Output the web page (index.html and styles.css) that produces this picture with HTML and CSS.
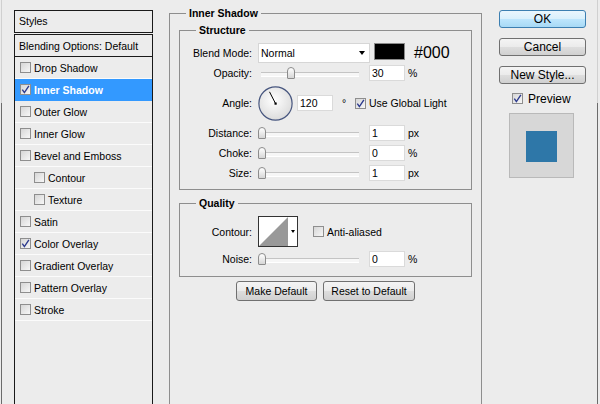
FILE: index.html
```html
<!DOCTYPE html>
<html lang="en">
<head>
    <meta charset="UTF-8">
    <title>Layer Style - Inner Shadow</title>
    <link rel="stylesheet" href="styles.css">
</head>
<body>
    <div class="dialog">
        <!-- Styles list -->
        <div class="styles-panel">
            <div class="styles-head">Styles</div>
            <ul class="style-list">
                <li class="blend">Blending Options: Default</li>
                <li><span class="check"></span>Drop Shadow</li>
                <li class="active"><span class="check"><svg viewBox="0 0 9 9"><path d="M1.3 4.6 L3.4 7.6 L7.9 0.8"/></svg></span>Inner Shadow</li>
                <li><span class="check"></span>Outer Glow</li>
                <li><span class="check"></span>Inner Glow</li>
                <li><span class="check"></span>Bevel and Emboss</li>
                <li class="sub"><span class="check"></span>Contour</li>
                <li class="sub"><span class="check"></span>Texture</li>
                <li><span class="check"></span>Satin</li>
                <li><span class="check"><svg viewBox="0 0 9 9"><path d="M1.3 4.6 L3.4 7.6 L7.9 0.8"/></svg></span>Color Overlay</li>
                <li><span class="check"></span>Gradient Overlay</li>
                <li><span class="check"></span>Pattern Overlay</li>
                <li><span class="check"></span>Stroke</li>
            </ul>
        </div>

        <!-- Options -->
        <div class="options">
            <fieldset class="group outer">
                <legend>Inner Shadow</legend>

                <fieldset class="group structure">
                    <legend>Structure</legend>
                    <div class="row">
                        <span class="label">Blend Mode:</span>
                        <div class="select"><span>Normal</span><span class="arrow"></span></div>
                        <span class="swatch"></span>
                        <span class="hex">#000</span>
                    </div>
                    <div class="row">
                        <span class="label">Opacity:</span>
                        <div class="slider"><span class="thumb" style="left: 26px"></span></div>
                        <span class="field">30</span>
                        <span class="unit">%</span>
                    </div>
                    <div class="row angle">
                        <span class="label">Angle:</span>
                        <svg class="dial" width="35" height="35" viewBox="0 0 35 35">
                            <defs>
                                <radialGradient id="dialFill" cx="45%" cy="40%" r="60%">
                                    <stop offset="0" stop-color="#ffffff"/>
                                    <stop offset="1" stop-color="#dcdcdc"/>
                                </radialGradient>
                            </defs>
                            <circle cx="17.5" cy="17.5" r="16.6" fill="url(#dialFill)" stroke="#46557e" stroke-width="1.2"/>
                            <line x1="17.5" y1="17.5" x2="11.5" y2="5.8" stroke="#000" stroke-width="1"/>
                            <rect x="16.5" y="16.5" width="2.2" height="2.2" fill="#000"/>
                        </svg>
                        <span class="field near">120</span>
                        <span class="deg">°</span>
                        <span class="check"><svg viewBox="0 0 9 9"><path d="M1.3 4.6 L3.4 7.6 L7.9 0.8"/></svg></span>
                        <span>Use Global Light</span>
                    </div>
                    <div class="row spaced">
                        <span class="label">Distance:</span>
                        <div class="slider"><span class="thumb" style="left: -3px"></span></div>
                        <span class="field">1</span>
                        <span class="unit">px</span>
                    </div>
                    <div class="row">
                        <span class="label">Choke:</span>
                        <div class="slider"><span class="thumb" style="left: -3px"></span></div>
                        <span class="field">0</span>
                        <span class="unit">%</span>
                    </div>
                    <div class="row">
                        <span class="label">Size:</span>
                        <div class="slider"><span class="thumb" style="left: -3px"></span></div>
                        <span class="field">1</span>
                        <span class="unit">px</span>
                    </div>
                </fieldset>

                <fieldset class="group quality">
                    <legend>Quality</legend>
                    <div class="row contour-row">
                        <span class="label">Contour:</span>
                        <div class="contour">
                            <svg width="29" height="29" viewBox="0 0 29 29">
                                <polygon points="0,29 29,0 29,29" fill="#999"/>
                            </svg>
                            <span class="contour-drop"><span class="arrow"></span></span>
                        </div>
                        <span class="check aa"></span>
                        <span>Anti-aliased</span>
                    </div>
                    <div class="row noise">
                        <span class="label">Noise:</span>
                        <div class="slider"><span class="thumb" style="left: -3px"></span></div>
                        <span class="field">0</span>
                        <span class="unit">%</span>
                    </div>
                </fieldset>

                <div class="btn-row">
                    <button class="btn make">Make Default</button>
                    <button class="btn reset">Reset to Default</button>
                </div>
            </fieldset>
        </div>

        <!-- Actions -->
        <div class="actions">
            <button class="btn big ok">OK</button>
            <button class="btn big">Cancel</button>
            <button class="btn big">New Style...</button>
            <div class="preview-toggle">
                <span class="check"><svg viewBox="0 0 9 9"><path d="M1.3 4.6 L3.4 7.6 L7.9 0.8"/></svg></span>
                <span>Preview</span>
            </div>
            <div class="preview">
                <span class="preview-swatch"></span>
            </div>
        </div>
    </div>
</body>
</html>
```

FILE: styles.css
```css
/* Base */
* {
    box-sizing: border-box;
    margin: 0;
    padding: 0;
}

body {
    font-family: 'Liberation Sans', Arial, sans-serif;
    font-size: 10.5px;
    color: #000;
    background: #ececec;
    overflow: hidden;
}

.dialog {
    display: flex;
    align-items: flex-start;
    width: 597px;
    height: 404px;
    margin-left: 1px;
    border-left: 1px solid #8a8a8a;
    border-right: 1px solid #8a8a8a;
    border-image: linear-gradient(#d0d0d0 0, #d0d0d0 103px, #6b6b6b 103px) 1;
    overflow: hidden;
}

/* Checkbox */
.check {
    display: inline-flex;
    align-items: center;
    justify-content: center;
    flex-shrink: 0;
    width: 11px;
    height: 11px;
    border: 1px solid #8e8e8e;
    background: linear-gradient(135deg, #d6d6d6, #f7f7f7);
    margin-right: 3px;
}

.check svg {
    width: 9px;
    height: 9px;
}

.check path {
    fill: none;
    stroke: #2d3b8e;
    stroke-width: 1.4;
}

/* Styles list */
.styles-panel {
    margin: 10px 0 0 12px;
    width: 139px;
}

.styles-head {
    height: 23px;
    border: 1px solid #1a1a1a;
    padding-left: 4px;
    line-height: 21px;
}

.style-list {
    list-style: none;
    margin-top: 1px;
    height: 380px;
    border: 1px solid #1a1a1a;
}

.style-list li {
    display: flex;
    align-items: center;
    height: 22px;
    padding-left: 5px;
    border-bottom: 1px solid #fbfbfb;
}

.style-list li.blend {
    padding-left: 4px;
    border-bottom-color: #1a1a1a;
}

.style-list li.sub {
    padding-left: 19px;
}

.style-list li.active {
    background: #3399ff;
    border-bottom-color: #3399ff;
    color: #fff;
    font-weight: bold;
}

/* Options */
.options {
    margin: 7px 0 0 16px;
    width: 313px;
}

fieldset.group {
    border: 1px solid #8e8e8e;
    min-inline-size: 0;
    padding: 0;
}

fieldset.group legend {
    margin-left: 16px;
    padding: 0 3px;
    font-weight: bold;
    line-height: 12px;
}

.outer {
    height: 420px;
}

.structure {
    margin: 5px 9px 0;
    padding: 7px 0 6px !important;
}

.quality {
    margin: 7px 9px 0;
    padding: 7px 0 7px !important;
}

.row {
    display: flex;
    align-items: center;
    height: 20px;
    white-space: nowrap;
}

.row .label {
    width: 72px;
    margin-right: 6px;
    text-align: right;
}

.row.angle {
    height: 34px;
    margin-top: 3px;
}

.row.spaced {
    margin-top: 3px;
}

.row.contour-row {
    height: 31px;
}

.row.noise {
    margin-top: 2px;
}

.select {
    display: flex;
    align-items: center;
    justify-content: space-between;
    width: 112px;
    height: 20px;
    padding: 0 4px 0 2px;
    background: #fff;
    border: 1px solid #d6d6d6;
}

.arrow {
    width: 0;
    height: 0;
    border-left: 3.5px solid transparent;
    border-right: 3.5px solid transparent;
    border-top: 4px solid #000;
}

.swatch {
    align-self: flex-start;
    width: 31px;
    height: 17px;
    margin-left: 4px;
    background: #000;
    border: 1px solid #8a8a8a;
}

.hex {
    margin-left: 9px;
    font-size: 16px;
}

/* Slider */
.slider {
    position: relative;
    width: 98px;
    height: 12px;
    margin-left: 3px;
}

.slider::before {
    content: "";
    position: absolute;
    left: 0;
    right: 0;
    top: 5px;
    height: 3px;
    background: #f6f6f6;
    border-top: 1px solid #c4c4c4;
    border-bottom: 1px solid #fff;
}

.thumb {
    position: absolute;
    top: 0;
    width: 8px;
    height: 12px;
    border: 1px solid #8c8c8c;
    border-radius: 4px 4px 1px 1px;
    background: linear-gradient(#ffffff, #d6d6d6);
}

.field {
    width: 36px;
    height: 16px;
    margin-left: 10px;
    padding-left: 2px;
    line-height: 14px;
    background: #fff;
    border: 1px solid #dadada;
}

.field.near {
    margin-left: 4px;
}

.unit {
    margin-left: 3px;
}

.deg {
    margin: 0 9px 0 9px;
    width: 4px;
}

/* Contour picker */
.contour {
    display: flex;
    width: 40px;
    height: 31px;
    background: #fff;
    border: 1px solid #333;
}

.contour-drop {
    display: flex;
    align-items: center;
    justify-content: center;
    flex: 1;
}

.contour-drop .arrow {
    border-left-width: 2.5px;
    border-right-width: 2.5px;
    border-top-width: 3px;
}

.check.aa {
    margin-left: 15px;
}

/* Buttons */
.btn-row {
    display: flex;
    justify-content: center;
    gap: 6px;
    margin-top: 4px;
}

.btn {
    height: 20px;
    font-family: inherit;
    font-size: 10.5px;
    color: #000;
    border: 1px solid #707070;
    border-radius: 3px;
    background: linear-gradient(#f4f4f4, #ebebeb 50%, #dedede 50%, #d0d0d0);
}

.btn.make {
    width: 81px;
}

.btn.reset {
    width: 92px;
}

/* Actions */
.actions {
    display: flex;
    flex-direction: column;
    margin: 10px 0 0 17px;
    width: 87px;
}

.btn.big {
    width: 87px;
    height: 18px;
    margin-bottom: 10px;
    font-size: 12px;
    line-height: 14px;
}

.btn.ok {
    border-color: #3c7fb1;
    background: linear-gradient(#eaf6fd, #d9f0fc 50%, #bee6fd 50%, #a7d9f5);
}

.preview-toggle {
    display: flex;
    align-items: center;
    margin: -2px 0 0 13px;
    height: 13px;
    font-size: 12px;
}

.preview-toggle .check {
    margin-right: 5px;
}

.preview {
    display: flex;
    align-items: center;
    justify-content: center;
    width: 65px;
    height: 65px;
    margin: 8px 0 0 10px;
    background: #d7d7d7;
    border: 1px solid #b9b9b9;
}

.preview-swatch {
    width: 31px;
    height: 31px;
    margin-top: 2px;
    background: #2e77a8;
}
```
